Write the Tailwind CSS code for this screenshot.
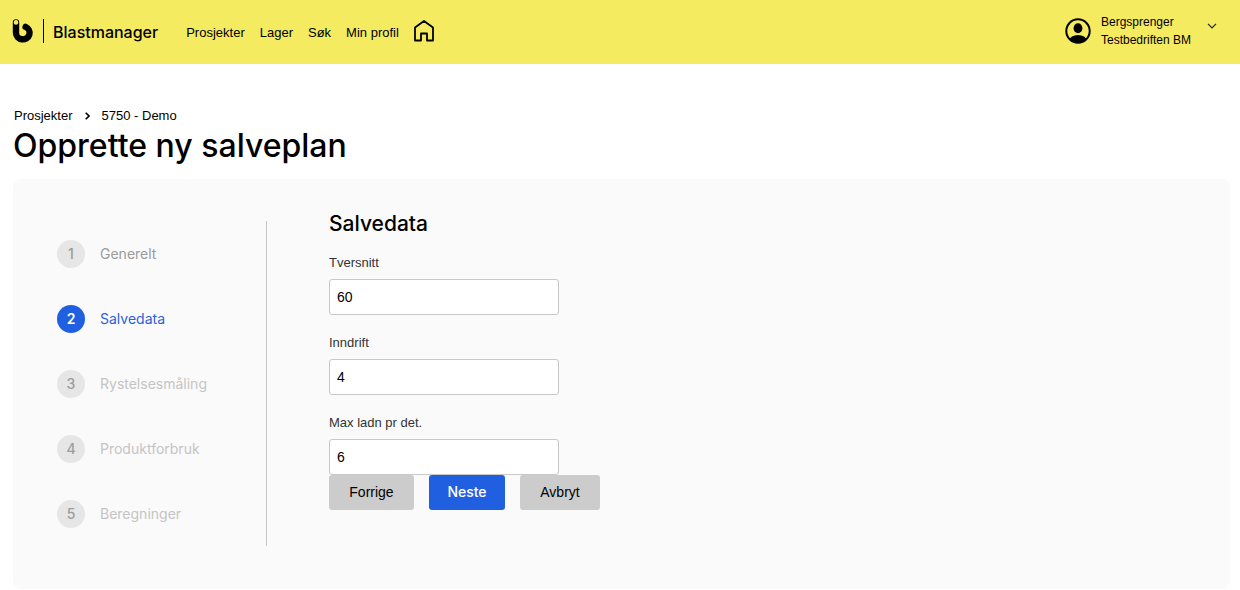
<!DOCTYPE html>
<html lang="no">
<head>
  <meta charset="utf-8">
  <meta name="viewport" content="width=device-width, initial-scale=1">
  <title>Blastmanager</title>
  <script src="https://cdn.jsdelivr.net/npm/@tailwindcss/browser@4"></script>
</head>
<body class="bg-white font-['Liberation_Sans',Arial,sans-serif] text-[13px] text-black">

  <header class="flex h-16 items-center justify-between bg-[#f4eb61] pr-[23px] pb-0.5 pl-3">
    <div class="flex items-center">
      <a href="#" class="flex items-end">
        <svg class="h-6 w-[22px]" viewBox="0 0 22 24" fill="none">
          <path d="M4 3.500V14A6.800 6.500 0 1 0 13.600 7.900" stroke="#000" stroke-width="6.400" stroke-linecap="round" stroke-linejoin="round"/>
          <circle cx="4" cy="3.400" r="2.300" fill="#f4eb61"/>
        </svg>
        <span class="ml-[9px] h-6 w-px bg-black"></span>
        <span class="ml-[9px] font-['Inter',sans-serif] text-base leading-[22px] font-medium">Blastmanager</span>
      </a>
      <nav class="ml-7 flex items-end gap-[15px] leading-[18px]">
        <a href="#">Prosjekter</a>
        <a href="#">Lager</a>
        <a href="#">Søk</a>
        <a href="#">Min profil</a>
        <a href="#" aria-label="Hjem">
          <svg class="h-[22px] w-5" viewBox="0 0 20 22" fill="none" stroke="#000" stroke-width="1.800" stroke-linejoin="round">
            <path d="M1 7.500 10 1l9 6.500v13h-6V13.500H7v7H1z"/>
          </svg>
        </a>
      </nav>
    </div>

    <button type="button" class="flex items-start text-left">
      <svg class="mt-[5px] size-[26px]" viewBox="0 0 26 26">
        <defs><clipPath id="face"><circle cx="13" cy="13" r="12"/></clipPath></defs>
        <circle cx="13" cy="13" r="11.700" fill="none" stroke="#000" stroke-width="2"/>
        <ellipse cx="13" cy="10.300" rx="4.400" ry="5" fill="#000"/>
        <ellipse cx="13" cy="22.500" rx="8.500" ry="5.500" fill="#000" clip-path="url(#face)"/>
      </svg>
      <span class="ml-[10px] text-xs leading-[18px]">Bergsprenger<br>Testbedriften BM</span>
      <svg class="mt-[10px] ml-4 h-[6px] w-[10px]" viewBox="0 0 10 6" fill="none" stroke="#222" stroke-width="1.200">
        <path d="M1 .8 5 4.800 9 .8"/>
      </svg>
    </button>
  </header>

  <main class="pt-[42px] pr-[10px] pl-[13px]">
    <nav class="flex items-center pl-px leading-5" aria-label="Brødsmuler">
      <a href="#">Prosjekter</a>
      <svg class="mx-3 h-2 w-[5px]" viewBox="0 0 5 8" fill="none" stroke="#000" stroke-width="1.600">
        <path d="M.7.700 4 4 .7 7.300"/>
      </svg>
      <a href="#">5750 - Demo</a>
    </nav>
    <h1 class="font-['Inter',sans-serif] text-[32px] leading-10 font-medium">Opprette ny salveplan</h1>

    <section class="mt-[13px] flex rounded-lg bg-[#fafafa] pt-7 pb-[43px] pl-11">
      <ol class="mt-[14px] w-[210px] shrink-0 border-r border-[#c6c6c6] font-['Inter',sans-serif] text-sm text-[#c4c4c4]">
        <li class="flex h-[65px] items-center gap-[15px] text-[#9b9b9b]">
          <span class="flex size-7 items-center justify-center rounded-full bg-[#e6e6e6] font-medium">1</span>Generelt
        </li>
        <li class="flex h-[65px] items-center gap-[15px] text-[#2e5fdc]">
          <span class="flex size-7 items-center justify-center rounded-full bg-[#1f5fe0] font-semibold text-white">2</span>Salvedata
        </li>
        <li class="flex h-[65px] items-center gap-[15px]">
          <span class="flex size-7 items-center justify-center rounded-full bg-[#e6e6e6] font-medium text-[#9b9b9b]">3</span>Rystelsesmåling
        </li>
        <li class="flex h-[65px] items-center gap-[15px]">
          <span class="flex size-7 items-center justify-center rounded-full bg-[#e6e6e6] font-medium text-[#9b9b9b]">4</span>Produktforbruk
        </li>
        <li class="flex h-[65px] items-center gap-[15px]">
          <span class="flex size-7 items-center justify-center rounded-full bg-[#e6e6e6] font-medium text-[#9b9b9b]">5</span>Beregninger
        </li>
      </ol>

      <form class="ml-[62px]">
        <h2 class="mb-[14px] font-['Inter',sans-serif] text-[21px] leading-[34px] font-medium">Salvedata</h2>
        <div class="flex w-[230px] flex-col gap-5">
          <div>
            <label for="tversnitt" class="block leading-4 text-[#333]">Tversnitt</label>
            <input id="tversnitt" type="text" value="60" class="mt-2 block h-9 w-full rounded-[3px] border border-[#c8c8c8] bg-white px-[7px] text-sm">
          </div>
          <div>
            <label for="inndrift" class="block leading-4 text-[#333]">Inndrift</label>
            <input id="inndrift" type="text" value="4" class="mt-2 block h-9 w-full rounded-[3px] border border-[#c8c8c8] bg-white px-[7px] text-sm">
          </div>
          <div>
            <label for="ladn" class="block leading-4 text-[#333]">Max ladn pr det.</label>
            <input id="ladn" type="text" value="6" class="mt-2 block h-9 w-full rounded-[3px] border border-[#c8c8c8] bg-white px-[7px] text-sm">
          </div>
        </div>
        <div class="flex gap-[15px] text-sm">
          <button type="button" class="h-[35px] w-[85px] rounded-[3px] bg-[#ccc] pb-0.5">Forrige</button>
          <button type="button" class="h-[35px] w-[76px] rounded-[3px] bg-[#1f5fe0] pb-0.5 font-['Inter',sans-serif] font-medium text-white">Neste</button>
          <button type="button" class="h-[35px] w-20 rounded-[3px] bg-[#ccc] pb-0.5">Avbryt</button>
        </div>
      </form>
    </section>
  </main>

</body>
</html>
